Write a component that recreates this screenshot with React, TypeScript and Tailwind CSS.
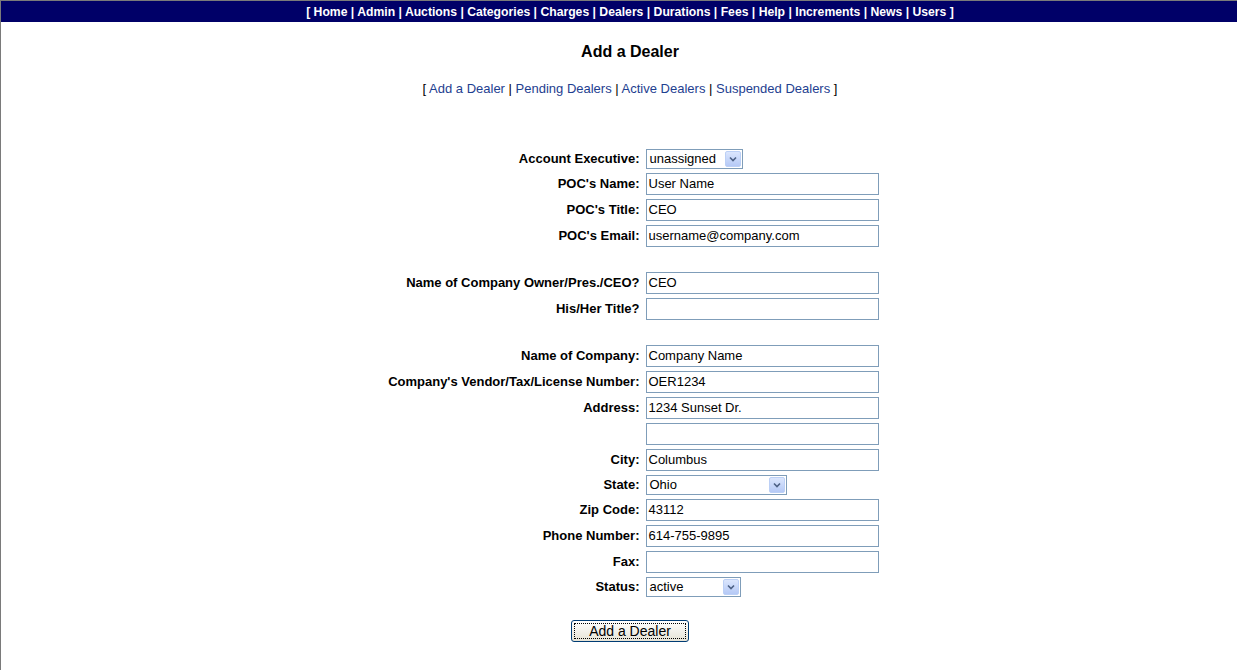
import type { ReactNode } from "react";

const NAV = ["Home", "Admin", "Auctions", "Categories", "Charges", "Dealers", "Durations", "Fees", "Help", "Increments", "News", "Users"];
const SUB = ["Add a Dealer", "Pending Dealers", "Active Dealers", "Suspended Dealers"];

type Row =
  | { kind: "text"; label: string; value?: string }
  | { kind: "select"; label: string; value: string; width: string }
  | { kind: "gap" };

const ROWS: Row[] = [
  { kind: "select", label: "Account Executive:", value: "unassigned", width: "w-[97px]" },
  { kind: "text", label: "POC's Name:", value: "User Name" },
  { kind: "text", label: "POC's Title:", value: "CEO" },
  { kind: "text", label: "POC's Email:", value: "username@company.com" },
  { kind: "gap" },
  { kind: "text", label: "Name of Company Owner/Pres./CEO?", value: "CEO" },
  { kind: "text", label: "His/Her Title?" },
  { kind: "gap" },
  { kind: "text", label: "Name of Company:", value: "Company Name" },
  { kind: "text", label: "Company's Vendor/Tax/License Number:", value: "OER1234" },
  { kind: "text", label: "Address:", value: "1234 Sunset Dr." },
  { kind: "text", label: "" },
  { kind: "text", label: "City:", value: "Columbus" },
  { kind: "select", label: "State:", value: "Ohio", width: "w-[141px]" },
  { kind: "text", label: "Zip Code:", value: "43112" },
  { kind: "text", label: "Phone Number:", value: "614-755-9895" },
  { kind: "text", label: "Fax:" },
  { kind: "select", label: "Status:", value: "active", width: "w-[95px]" },
];

function TextBox({ value }: { value?: string }) {
  return (
    <div className="w-[233px] h-[22px] border border-[#7f9db9] bg-white pl-[2px] flex items-center text-[13px] text-black">
      {value}
    </div>
  );
}

function SelectBox({ value, width }: { value: string; width: string }) {
  return (
    <div className={`${width} h-[20px] border border-[#7f9db9] bg-white flex items-center justify-between pl-[3px] pr-[1px] text-[13px] text-black`}>
      <span>{value}</span>
      <span className="w-[16px] h-[16px] rounded-[2px] border border-[#bcd0f6] bg-gradient-to-b from-[#dbe6fd] to-[#b5c9f6] flex items-center justify-center">
        <svg width="8" height="6" viewBox="0 0 8 6">
          <path d="M1 1.5 L4 4.5 L7 1.5" fill="none" stroke="#4d6185" strokeWidth="1.6" />
        </svg>
      </span>
    </div>
  );
}

function Label({ children }: { children: ReactNode }) {
  return <div className="text-right font-bold text-[13px] text-black whitespace-nowrap self-center">{children}</div>;
}

export default function App() {
  return (
    <div className="w-full min-h-screen overflow-hidden bg-white" style={{ fontFamily: '"Liberation Sans", Arial, sans-serif' }}>
      <div className="w-[1259px] min-h-[670px] border-t border-l border-[#7a7a7a]">
        <div className="h-[21px] pt-[2px] bg-[#000068] flex items-center justify-center text-white font-bold text-[12.2px]">
          <span>
            [{" "}
            {NAV.map((n, i) => (
              <span key={n}>
                {n}
                {i < NAV.length - 1 ? " | " : ""}
              </span>
            ))}{" "}
            ]
          </span>
        </div>

        <h1 className="mt-[21px] text-center font-bold text-[16px] leading-[18px] text-black">Add a Dealer</h1>

        <div className="mt-[20px] text-center text-[13px] leading-[15px] text-black">
          [{" "}
          {SUB.map((s, i) => (
            <span key={s}>
              <a className="text-[#1e4090]">{s}</a>
              {i < SUB.length - 1 ? " | " : ""}
            </span>
          ))}{" "}
          ]
        </div>

        <div className="mt-[53px] flex justify-center">
          <div className="grid grid-cols-[258px_233px] gap-x-[6px] gap-y-[4px]">
            {ROWS.map((r, i) =>
              r.kind === "gap" ? (
                <div key={i} className="col-span-2 h-[17px]" />
              ) : (
                <div key={i} className="contents">
                  <Label>{r.label}</Label>
                  {r.kind === "text" ? <TextBox value={r.value} /> : <SelectBox value={r.value} width={r.width} />}
                </div>
              )
            )}
          </div>
        </div>

        <div className="mt-[23px] flex justify-center">
          <button className="w-[118px] h-[22px] rounded-[3px] border border-[#003c74] bg-gradient-to-b from-white to-[#e6e3d6] p-[2px] text-[14px] text-black">
            <span className="block w-full h-full border border-dotted border-black leading-[15px]">Add a Dealer</span>
          </button>
        </div>
      </div>
    </div>
  );
}
